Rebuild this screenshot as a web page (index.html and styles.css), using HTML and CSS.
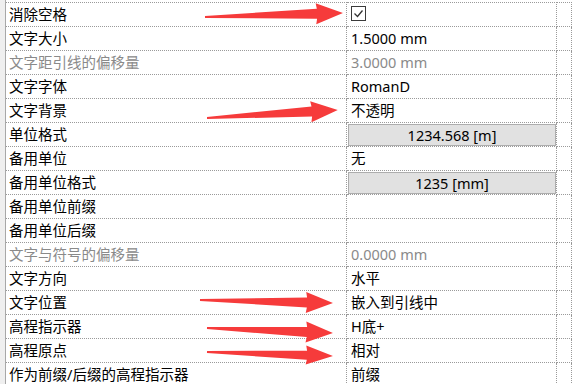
FILE: index.html
```html
<!DOCTYPE html>
<html lang="zh">
<head>
<meta charset="utf-8">
<link rel="stylesheet" href="styles.css">
</head>
<body>
<div class="panel">
  <div class="gutter"></div>
  <div class="grid">
    <div class="row"><div class="lbl">消除空格</div><div class="val"><span class="chk"><svg width="15" height="15" viewBox="0 0 15 15"><rect x="0.5" y="0.5" width="14" height="14" fill="#fff" stroke="#3a3a3a"/><polyline points="3.5,7.5 6.5,10.5 11.5,4.5" fill="none" stroke="#333" stroke-width="1.3"/></svg></span></div><div class="ext"></div></div>
    <div class="row"><div class="lbl">文字大小</div><div class="val">1.5000 mm</div><div class="ext"></div></div>
    <div class="row"><div class="lbl dis">文字距引线的偏移量</div><div class="val dis">3.0000 mm</div><div class="ext"></div></div>
    <div class="row"><div class="lbl">文字字体</div><div class="val">RomanD</div><div class="ext"></div></div>
    <div class="row"><div class="lbl">文字背景</div><div class="val">不透明</div><div class="ext"></div></div>
    <div class="row"><div class="lbl">单位格式</div><div class="val btncell"><span class="btn">1234.568 [m]</span></div><div class="ext"></div></div>
    <div class="row"><div class="lbl">备用单位</div><div class="val">无</div><div class="ext"></div></div>
    <div class="row"><div class="lbl">备用单位格式</div><div class="val btncell"><span class="btn">1235 [mm]</span></div><div class="ext"></div></div>
    <div class="row"><div class="lbl">备用单位前缀</div><div class="val"></div><div class="ext"></div></div>
    <div class="row"><div class="lbl">备用单位后缀</div><div class="val"></div><div class="ext"></div></div>
    <div class="row"><div class="lbl dis">文字与符号的偏移量</div><div class="val dis">0.0000 mm</div><div class="ext"></div></div>
    <div class="row"><div class="lbl">文字方向</div><div class="val">水平</div><div class="ext"></div></div>
    <div class="row"><div class="lbl">文字位置</div><div class="val">嵌入到引线中</div><div class="ext"></div></div>
    <div class="row"><div class="lbl">高程指示器</div><div class="val">H底+</div><div class="ext"></div></div>
    <div class="row"><div class="lbl">高程原点</div><div class="val">相对</div><div class="ext"></div></div>
    <div class="row"><div class="lbl">作为前缀/后缀的高程指示器</div><div class="val">前缀</div><div class="ext"></div></div>
  </div>
</div>
<svg class="arrows" width="573" height="384" viewBox="0 0 573 384">
  <g fill="#f63b3b">
    <g transform="translate(205,17) rotate(-1.66)"><polygon points="0,-1 112,-5 111,-10.5 138,0 111,10.5 112,5 0,1"/></g>
    <g transform="translate(207,118) rotate(-3.5)"><polygon points="0,-1 105,-5 104,-10.5 131,0 104,10.5 105,5 0,1"/></g>
    <g transform="translate(200,300) rotate(1.3)"><polygon points="0,-1 107,-5 106,-10.5 133,0 106,10.5 107,5 0,1"/></g>
    <g transform="translate(207,328) rotate(2.27)"><polygon points="0,-1 100,-5 99,-10.5 126,0 99,10.5 100,5 0,1"/></g>
    <g transform="translate(207,352) rotate(1.8)"><polygon points="0,-1 100,-4.5 99,-9.5 126,0 99,9.5 100,4.5 0,1"/></g>
  </g>
</svg>
</body>
</html>
```
FILE: styles.css
```css
html, body {
  margin: 0;
  padding: 0;
  background: #fff;
  width: 573px;
  height: 384px;
  overflow: hidden;
}
body {
  position: relative;
  font-family: "Noto Sans", "Noto Sans CJK SC", sans-serif;
  font-size: 14.5px;
  color: #000;
}
.panel {
  display: flex;
  height: 384px;
}
.gutter {
  width: 5px;
  background: #efefef;
  border-right: 1px solid #a8a8a8;
  flex: none;
}
.grid {
  flex: 1;
  padding-top: 2px;
}
.grid .row:first-child > div {
  border-top: 1px dotted #9a9a9a;
}
.row {
  display: grid;
  grid-template-columns: 341px 210px 15px 1fr;
}
.row > div {
  box-sizing: border-box;
  border-bottom: 1px dotted #9a9a9a;
  height: 24px;
}
.grid .row:first-child > div {
  height: 25px;
}
.lbl, .val, .ext {
  border-right: 1px dotted #9a9a9a;
}
.lbl {
  padding-left: 3px;
  line-height: 23px;
  white-space: nowrap;
}
.val {
  padding-left: 4px;
  line-height: 23px;
  white-space: nowrap;
}
.dis {
  color: #8a8a8a;
}
.chk {
  display: inline-block;
  margin-top: 3px;
  height: 15px;
  vertical-align: top;
}
.chk svg {
  display: block;
}
.btncell {
  padding: 0 0 0 1px;
}
.btn {
  display: block;
  box-sizing: border-box;
  margin-top: 1px;
  height: 22px;
  width: 208px;
  background: #e1e1e1;
  border: 1px solid #adadad;
  text-align: center;
  line-height: 20px;
}
.arrows {
  position: absolute;
  left: 0;
  top: 0;
  pointer-events: none;
}
```
